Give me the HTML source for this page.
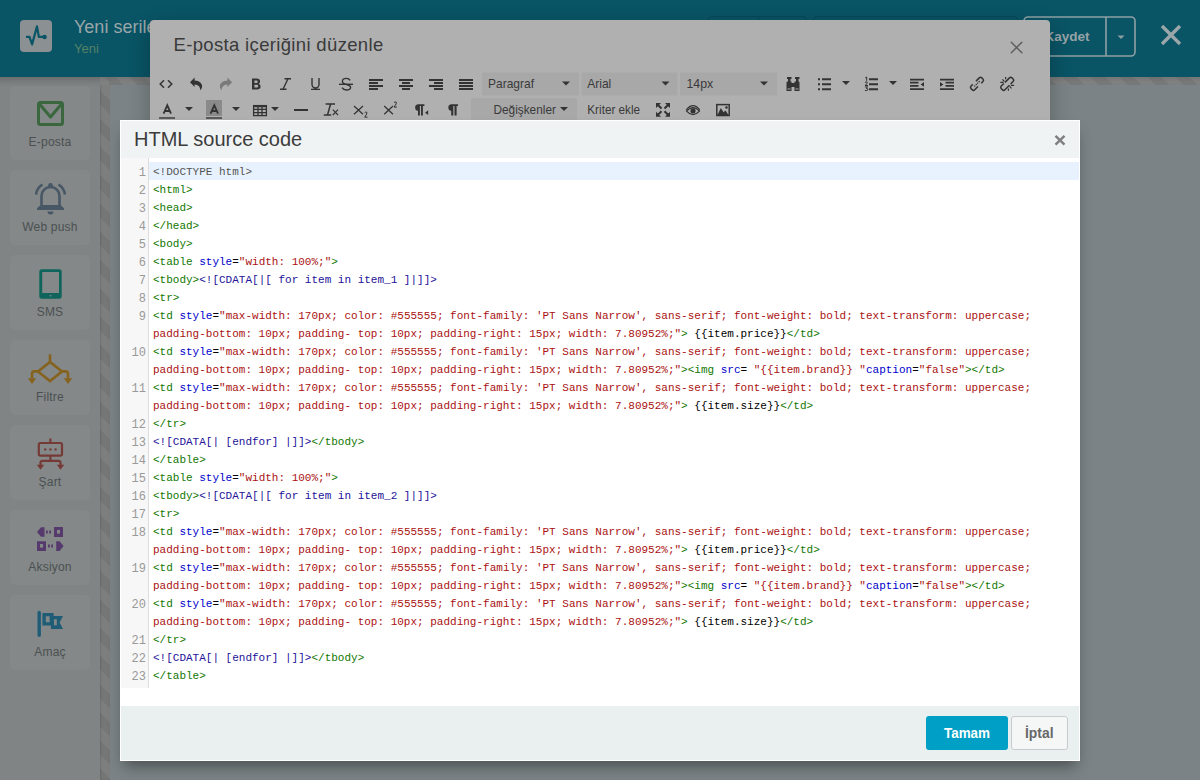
<!DOCTYPE html>
<html><head><meta charset="utf-8">
<style>
*{margin:0;padding:0;box-sizing:border-box}
html,body{width:1200px;height:780px;overflow:hidden;background:#7b8386;font-family:"Liberation Sans",sans-serif;position:relative}
.abs{position:absolute}
#hdr{left:0;top:0;width:1200px;height:77px;background:#095465}
#logo{left:20px;top:20px;width:32px;height:32px;border-radius:4px;background:#8b9192}
#ttl{left:74px;top:17px;font-size:18px;color:#9aa6a9;white-space:nowrap}
#sub{left:74px;top:41px;font-size:13px;color:#558266}
#side{left:0;top:77px;width:100px;height:703px;background:#808484}
.card{position:absolute;left:10px;width:80px;height:75px;border-radius:5px;background:#848888}
.card span{position:absolute;left:0;width:80px;text-align:center;top:50px;font-size:12px;letter-spacing:.2px;color:#4b5052}
.card svg{position:absolute;left:0;top:0}
#vstripe{left:100px;top:77px;width:10px;height:703px;background:repeating-linear-gradient(45deg,#757777 0 10px,#7d7f7f 10px 20px);background-position:0 3px;box-shadow:inset 1px 0 2px rgba(0,0,0,.12)}
#hstripe{left:100px;top:77px;width:1100px;height:8px;background:repeating-linear-gradient(45deg,#777979 0 10px,#7f8080 10px 20px);background-position:9px 0}
#m1{left:150px;top:20px;width:900px;height:300px;background:#b0b0b0;border-radius:4px 4px 0 0;box-shadow:0 8px 22px rgba(0,0,0,.26)}
#m1 .t{position:absolute;left:23.5px;top:13.5px;font-size:18.5px;letter-spacing:.34px;color:#3a3a3a;white-space:nowrap}
#m2{left:120px;top:120px;width:960px;height:641px;background:#fff;box-shadow:0 9px 14px -4px rgba(0,0,0,.4)}
#m2h{left:1px;top:1px;width:958px;height:37px;background:#f0f3f4}
#m2h .t{position:absolute;left:13px;top:7px;font-size:20px;color:#3c3c3c;white-space:nowrap}
#code{left:0;top:42px;width:960px;font-family:"Liberation Mono",monospace;font-size:11px;line-height:18px}
#gut{left:1px;top:38px;width:28px;height:530px;background:#f7f7f7;border-right:1px solid #ddd}
.ln{position:absolute;margin-top:2.5px;left:0;width:26px;text-align:right;color:#999;font-family:"Liberation Mono",monospace;font-size:12px;line-height:17px}
.row{position:absolute;margin-top:1px;left:33px;white-space:pre;color:#000;height:18px;font-family:"Liberation Mono",monospace;font-size:11px;line-height:18px}
.act{position:absolute;left:29px;top:42px;width:930px;height:18px;background:#e8f2ff}
.g{color:#170}.b{color:#00c}.r{color:#a11}.m{color:#555}.c{color:#219}
#foot{left:1px;top:586px;width:958px;height:54px;background:#eaf0f0}
.btn{position:absolute;top:10px;height:34px;border-radius:3px;font-size:14px;font-weight:bold;text-align:center;line-height:33px}
</style></head><body>
<div id="hdr" class="abs"></div>
<div id="logo" class="abs"></div>
<div id="ttl" class="abs">Yeni serileri</div>
<div id="sub" class="abs">Yeni</div>
<div id="side" class="abs"></div>
<div class="card" style="top:85px"><svg width="80" height="75"><rect x="28.5" y="17.5" width="24" height="22" rx="2" fill="none" stroke="#3a673d" stroke-width="3"/><path d="M29.5 19L40.5 32L51.5 19" fill="none" stroke="#3a673d" stroke-width="3" stroke-linejoin="round"/></svg><span>E-posta</span></div>
<div class="card" style="top:170px"><svg width="80" height="75"><path d="M31.5 36.5V26A9 9 0 0 1 49.5 26V36.5" fill="none" stroke="#475766" stroke-width="2.6"/><path d="M30.5 35L27 38.2V40H54V38.2L50.5 35Z" fill="#475766"/><circle cx="40.5" cy="15.5" r="2.4" fill="#475766"/><path d="M37.5 41.5A3 3 0 0 0 43.5 41.5Z" fill="#475766"/><path d="M26 24.5A14 14 0 0 1 32.5 14.5M55 24.5A14 14 0 0 0 48.5 14.5" fill="none" stroke="#475766" stroke-width="2.6"/></svg><span>Web push</span></div>
<div class="card" style="top:255px"><svg width="80" height="75"><path fill-rule="evenodd" fill="#0f655c" d="M31.8 14.2H49.2A2.5 2.5 0 0 1 51.7 16.7V41.3A2.5 2.5 0 0 1 49.2 43.8H31.8A2.5 2.5 0 0 1 29.3 41.3V16.7A2.5 2.5 0 0 1 31.8 14.2ZM32.2 17V38.1H49V17Z"/><path d="M39 40.2h3l-1.5 1.5z" fill="#848888"/></svg><span>SMS</span></div>
<div class="card" style="top:340px"><svg width="80" height="75"><path d="M40 14.3V22M40 22L28 31.4L40 41L52 31.4Z M28 31.4H24.5Q22 31.4 22 34V38.5 M52 31.4H55.5Q58 31.4 58 34V38.5" fill="none" stroke="#85631f" stroke-width="2.6" stroke-linejoin="miter"/><path d="M17.8 38.2H26.2L22 44Z M53.8 38.2H62.2L58 44Z" fill="#85631f"/></svg><span>Filtre</span></div>
<div class="card" style="top:425px"><svg width="80" height="75"><rect x="28.8" y="18" width="23.2" height="12.6" rx="1.6" fill="none" stroke="#753a36" stroke-width="2.2"/><path d="M40.4 13.5V18M40.4 30.6V35.8M30.5 40V37.8Q30.5 35.8 32.5 35.8H48.5Q50.5 35.8 50.5 37.8V40" fill="none" stroke="#753a36" stroke-width="2.2"/><circle cx="35.2" cy="24.4" r="1.2" fill="#753a36"/><circle cx="40.4" cy="24.4" r="1.2" fill="#753a36"/><circle cx="45.6" cy="24.4" r="1.2" fill="#753a36"/><path d="M26.8 39.8H34.2L30.5 44.8Z M46.8 39.8H54.2L50.5 44.8Z" fill="#753a36"/></svg><span>Şart</span></div>
<div class="card" style="top:510px"><svg width="80" height="75"><path d="M27 22L31 17.2H34.5V26.8H31Z M44 17H53V27H44Z M27 31.2H36V41H27Z M46.2 31.2H49.6L53.6 36.1L49.6 41H46.2Z" fill="#573a6d"/><path d="M36 20.5h1.8v3h-1.8z M39.2 20.5h1.8v3h-1.8z M38 34.5h1.8v3h-1.8z M41.2 34.5h1.8v3h-1.8z" fill="#573a6d"/><rect x="47" y="20" width="3" height="3.6" fill="#848888"/><rect x="30" y="34" width="3" height="3.6" fill="#848888"/></svg><span>Aksiyon</span></div>
<div class="card" style="top:595px"><svg width="80" height="75"><path d="M29.2 17.5V40.3" stroke="#1f5d76" stroke-width="3.4" stroke-linecap="round"/><path fill-rule="evenodd" fill="#1f5d76" d="M32.4 18H43.6V21H53L49.6 27.5L53 34H40.9V30.5H32.4Z M35.8 21.2V27.3H39.6V21.2Z M44 24.2V30.3H46.8V24.2Z"/></svg><span>Amaç</span></div>
<div id="vstripe" class="abs"></div>
<div id="hstripe" class="abs"></div>
<div class="abs" style="left:0;top:77px;width:100px;height:9px;background:linear-gradient(#767878,#7a7d7d 60%,#7f8383)"></div>
<div class="abs" style="left:0;top:77px;width:1200px;height:5px;background:linear-gradient(rgba(0,0,0,.08),rgba(0,0,0,0))"></div>
<svg class="abs" style="left:0;top:0" width="1200" height="780" viewBox="0 0 1200 780">
 <path d="M26 36.8H29.5L32.1 44.4L37 26.4L38.8 36.8H44" fill="none" stroke="#0a5566" stroke-width="2.2" stroke-linejoin="round"/>
 <circle cx="44.6" cy="37" r="2.2" fill="#0a5566"/>
 <!-- header right buttons (behind modal) -->
 <rect x="708.5" y="16.5" width="98" height="39" rx="4" fill="none" stroke="#07485a" stroke-width="1.2"/><path d="M758.5 16.5V56" stroke="#07485a" stroke-width="1.2"/>
 <rect x="813.5" y="16.5" width="204" height="39" rx="4" fill="none" stroke="#07485a" stroke-width="1.2"/>
 <rect x="1024" y="17" width="111" height="39" rx="4" fill="none" stroke="#8fa0a4" stroke-width="1.6"/>
 <line x1="1106" y1="17" x2="1106" y2="56" stroke="#8fa0a4" stroke-width="1.6"/>
 <path d="M1117.5 35.5h7l-3.5 3.5z" fill="#8fa0a4"/>
 <text x="1044.5" y="40.5" font-family="Liberation Sans" font-weight="bold" font-size="13.5" fill="#97a3a6">Kaydet</text>
 <path d="M1162 26L1180 44M1180 26L1162 44" stroke="#9aa7aa" stroke-width="3.4"/>
</svg>
<div id="m1" class="abs"><div class="t">E-posta içeriğini düzenle</div></div>
<svg class="abs" style="left:0;top:0" width="1200" height="130" viewBox="0 0 1200 130">
 <g fill="none" stroke="#5c5c5c" stroke-width="1.4" stroke-linecap="round"><path d="M1011.3 42.2L1021.9 52.8M1021.9 42.2L1011.3 52.8"/></g>
 <!-- select boxes -->
 <rect x="482" y="72.5" width="97" height="23" fill="#a8a8a8"/>
 <rect x="581.5" y="72.5" width="96" height="23" fill="#a8a8a8"/>
 <rect x="680" y="72.5" width="97" height="23" fill="#a8a8a8"/>
 <rect x="471" y="98" width="106" height="22" fill="#a8a8a8"/>
 <rect x="206" y="100" width="16" height="16" fill="#8a8a8a"/>
 <g font-family="Liberation Sans" font-size="13" fill="#3a3a3a">
  <text x="488" y="88" textLength="46" lengthAdjust="spacingAndGlyphs">Paragraf</text>
  <text x="587.3" y="88" textLength="24" lengthAdjust="spacingAndGlyphs">Arial</text>
  <text x="686.5" y="88" textLength="26.7" lengthAdjust="spacingAndGlyphs">14px</text>
  <text x="493.5" y="114" textLength="62.4" lengthAdjust="spacingAndGlyphs">Değişkenler</text>
  <text x="587.3" y="114" textLength="52.8" lengthAdjust="spacingAndGlyphs">Kriter ekle</text>
 </g>
 <g fill="#333">
  <path d="M562 81.5h8l-4 4z M661.5 81.5h8l-4 4z M760 81.5h8l-4 4z M560 107h8l-4 4z"/>
  <path d="M842 81h8l-4 4z M889 81h8l-4 4z M185 107h8l-4 4z M232 107h8l-4 4z M271 107h8l-4 4z"/>
 </g>
 <g fill="none" stroke="#333" stroke-width="1.5">
  <path d="M164 80.2L160.2 84L164 87.8M168 80.2L171.8 84L168 87.8"/>
 </g>
 <path fill="#333" d="M190 82.3L194.6 77.6V80.5C199.5 80.6 202.5 83.6 202.1 86.7C201.9 88.2 201.2 89.4 200 90.2C200.6 87.2 198.6 84.6 194.6 84.4V87Z"/>
 <path fill="#7a7a7a" d="M232 82.3L227.4 77.6V80.5C222.5 80.6 219.5 83.6 219.9 86.7C220.1 88.2 220.8 89.4 222 90.2C221.4 87.2 223.4 84.6 227.4 84.4V87Z"/>
 <path fill="#333" fill-rule="evenodd" d="M252 78.5H256.6C259 78.5 260.1 79.8 260.1 81.4C260.1 82.6 259.4 83.4 258.5 83.8C259.7 84.2 260.6 85.2 260.6 86.7C260.6 88.5 259.2 89.5 256.9 89.5H252Z M254.4 80.4V83H256.2C257.2 83 257.7 82.5 257.7 81.7C257.7 80.9 257.2 80.4 256.2 80.4Z M254.4 84.8V87.6H256.5C257.6 87.6 258.2 87.1 258.2 86.2C258.2 85.3 257.6 84.8 256.5 84.8Z"/>
 <g fill="none" stroke="#333" stroke-width="1.4">
  <path d="M284.5 78.7H291M280 89.3H286.5M288 78.7L283 89.3"/>
  <path d="M312 78V84.5A3.5 3.5 0 0 0 319 84.5V78M311 89.4H320"/>
  <path d="M339 84.3H353"/>
  <path d="M350.2 80.3C349.3 78.9 348 78.4 346.3 78.4C344 78.4 342.4 79.6 342.4 81.4C342.4 85.3 350.6 83.7 350.6 87.3C350.6 89.1 348.9 90 346.6 90C344.6 90 343 89.2 342 87.6"/>
 </g>
 <g fill="#333">
  <path d="M369 79h14v2h-14z M369 82h9v2h-9z M369 85h14v2h-14z M369 88h9v2h-9z"/>
  <path d="M399 79h14v2h-14z M402 82h8v2h-8z M399 85h14v2h-14z M402 88h8v2h-8z"/>
  <path d="M429 79h14v2h-14z M434 82h9v2h-9z M429 85h14v2h-14z M434 88h9v2h-9z"/>
  <path d="M459 79h14v2h-14z M459 82h14v2h-14z M459 85h14v2h-14z M459 88h14v2h-14z"/>
 </g>
 <!-- binoculars -->
 <g fill="#333">
  <path d="M787 77h4.5v2h-4.5z M795 77h4.5v2h-4.5z M788 79h2.5v3h-2.5z M796 79h2.5v3h-2.5z"/>
  <path d="M786.5 82.5Q786.5 81.5 787.5 81.5H791.5V91H786.5Z M794.5 81.5H798.5Q799.5 81.5 799.5 82.5V91H794.5Z M791.5 83h3v4h-3z"/>
 </g>
 <path fill="#aaa" d="M787.5 88.5h3v1h-3z M795.5 88.5h3v1h-3z"/>
 <!-- bullist -->
 <g fill="#333">
  <path d="M818 78.2h2v2h-2z M818 83.2h2v2h-2z M818 88.2h2v2h-2z M822 78.2h9v2h-9z M822 83.2h9v2h-9z M822 88.2h9v2h-9z"/>
  <path d="M869 78.2h9v2h-9z M869 83.2h9v2h-9z M869 88.2h9v2h-9z"/>
 </g>
 <path fill="none" stroke="#333" stroke-width="1" d="M865.2 77.9L866.7 77V80.9M864.9 82.4Q866 81.5 867.3 82.2Q868 83.2 865 85.5H868M864.9 86.9H867.7L866.1 88.3Q868.2 88.3 868 89.7Q867.2 91 864.9 90.4"/>
 <!-- outdent/indent -->
 <g fill="#333">
  <path d="M910 78.8h14v1.8h-14z M910 81.8h8.5v1.8h-8.5z M910 85h8.5v1.8h-8.5z M910 88.2h14v1.8h-14z M924 82L920.6 84.4L924 86.8Z"/>
  <path d="M940 78.8h14v1.8h-14z M945.5 81.8h8.5v1.8h-8.5z M945.5 85h8.5v1.8h-8.5z M940 88.2h14v1.8h-14z M940 82L943.4 84.4L940 86.8Z"/>
 </g>
 <!-- link / unlink -->
 <g fill="none" stroke="#333" stroke-width="1.5">
  <g transform="translate(977 83.8) rotate(-45)"><path d="M1.2 -2.6H5.8A1.8 1.8 0 0 1 7.6 -0.8V0.8A1.8 1.8 0 0 1 5.8 2.6H3.4M-1.2 2.6H-5.8A1.8 1.8 0 0 1 -7.6 0.8V-0.8A1.8 1.8 0 0 1 -5.8 -2.6H-3.4"/><path d="M-3.8 0H3.8" stroke-width="1.2" stroke-dasharray="1.3 .8"/></g>
  <g transform="translate(1007.2 83.8) rotate(-45)"><path d="M-0.6 -2.6H5.8A1.8 1.8 0 0 1 7.6 -0.8V0.8A1.8 1.8 0 0 1 5.8 2.6H2.2M0.6 2.6H-5.8A1.8 1.8 0 0 1 -7.6 0.8V-0.8A1.8 1.8 0 0 1 -5.8 -2.6H-2.2"/></g>
  <path d="M1000.3 82.3H1003.6M1002.4 79.4L1004.3 81.3M1005.6 77V79.2M1010.8 85.4H1014.1M1009.6 86.4L1011.5 88.3M1008.4 88.6V90.8" stroke-width="1.2"/>
 </g>
 <!-- row 2 -->
 <g fill="none" stroke="#333" stroke-width="1.4">
  <path d="M163.6 113.6L167.3 105.3L171 113.6M165 111H169.6" stroke-width="1.8"/>
  <path d="M210.6 113.6L214.3 105.3L218 113.6M212 111H216.6" stroke-width="1.8"/>
 </g>
 <rect x="159" y="117" width="16" height="2" fill="#5a5a5a"/>
 <rect x="206" y="117" width="16" height="2" fill="#5a5a5a"/>
 <g fill="none" stroke="#333" stroke-width="1.3">
  <rect x="253.6" y="105.6" width="12.8" height="10"/>
  <path d="M253.6 109.3H266.4M253.6 112.6H266.4M258 107V115.6M262 107V115.6"/>
 </g>
 <rect x="253" y="105" width="14" height="2.2" fill="#333"/>
 <rect x="294" y="109" width="14" height="2" fill="#333"/>
 <g fill="none" stroke="#333" stroke-width="1.5">
  <path d="M325.6 104H335M330.6 104L327.6 114.6M323.8 115H331.2"/>
  <path d="M332.8 109.6L338 115M338 109.6L332.8 115" stroke-width="1.1"/>
  <path d="M354 106L363 114.3M363 106L354 114.3" stroke-width="1.2"/>
  <path d="M384.2 106L393 114.3M393 106L384.2 114.3" stroke-width="1.2"/>
 </g>
 <path fill="none" stroke="#333" stroke-width="1" d="M364.6 112.6Q365.7 111.7 366.9 112.3Q367.6 113.3 364.7 117.2H367.5M394 102.5Q395.1 101.6 396.3 102.2Q397 103.2 394.1 107.1H396.9"/>
 <!-- pilcrows -->
 <g fill="#333">
  <path d="M417.8 104.3H424.4V106H422.9V115.6H421V106H419.9V115.6H418V110.8A3.3 3.3 0 0 1 417.8 104.3Z"/>
  <path d="M428.2 110.3V115.1L425 112.7Z"/>
  <path d="M451 104.3H458V106H456.6V115.6H454.5V106H453.3V115.6H451.2V110.8A3.3 3.3 0 0 1 451 104.3Z"/>
 </g>
 <!-- fullscreen -->
 <g fill="#333">
  <path d="M656 103H661L656 108Z M670 103H665L670 108Z M656 116.8H661L656 111.8Z M670 116.8H665L670 111.8Z"/>
 </g>
 <g stroke="#333" stroke-width="2"><path d="M657.5 104.5L661.5 108.5M668.5 104.5L664.5 108.5M657.5 115.3L661.5 111.3M668.5 115.3L664.5 111.3"/></g>
 <!-- eye -->
 <g fill="none" stroke="#333" stroke-width="1.2">
  <path d="M686.3 109.8Q693 101.5 699.7 109.8"/>
  <path d="M686.5 111.2Q693 104 699.5 111.2Q693 118 686.5 111.2Z"/>
 </g>
 <circle cx="693" cy="110.8" r="2.6" fill="#333"/>
 <!-- image -->
 <rect x="716.8" y="104.6" width="12.4" height="10.9" fill="none" stroke="#333" stroke-width="1.5"/>
 <path d="M717.5 115L720.8 108L723.6 112.3L725.5 110.5L728.5 115Z" fill="#333"/>
 <circle cx="726.5" cy="107.5" r="1.3" fill="#333"/>
</svg>

<div id="m2" class="abs">
  <div id="m2h" class="abs"><div class="t">HTML source code</div></div>
  <div id="gut" class="abs"></div>
  <div class="act"></div>
<div class="ln" style="top:42px">1</div>
<div class="row" style="top:42px"><span class="m">&lt;!DOCTYPE html&gt;</span></div>
<div class="ln" style="top:60px">2</div>
<div class="row" style="top:60px"><span class="g">&lt;html&gt;</span></div>
<div class="ln" style="top:78px">3</div>
<div class="row" style="top:78px"><span class="g">&lt;head&gt;</span></div>
<div class="ln" style="top:96px">4</div>
<div class="row" style="top:96px"><span class="g">&lt;/head&gt;</span></div>
<div class="ln" style="top:114px">5</div>
<div class="row" style="top:114px"><span class="g">&lt;body&gt;</span></div>
<div class="ln" style="top:132px">6</div>
<div class="row" style="top:132px"><span class="g">&lt;table</span> <span class="b">style</span>=<span class="r">"width: 100%;"</span><span class="g">&gt;</span></div>
<div class="ln" style="top:150px">7</div>
<div class="row" style="top:150px"><span class="g">&lt;tbody&gt;</span><span class="c">&lt;![CDATA[|[ for item in item_1 ]|]]&gt;</span></div>
<div class="ln" style="top:168px">8</div>
<div class="row" style="top:168px"><span class="g">&lt;tr&gt;</span></div>
<div class="ln" style="top:186px">9</div>
<div class="row" style="top:186px"><span class="g">&lt;td</span> <span class="b">style</span>=<span class="r">"max-width: 170px; color: #555555; font-family: 'PT Sans Narrow', sans-serif; font-weight: bold; text-transform: uppercase;</span></div>
<div class="row" style="top:204px"><span class="r">padding-bottom: 10px; padding- top: 10px; padding-right: 15px; width: 7.80952%;"</span><span class="g">&gt;</span> {{item.price}}<span class="g">&lt;/td&gt;</span></div>
<div class="ln" style="top:222px">10</div>
<div class="row" style="top:222px"><span class="g">&lt;td</span> <span class="b">style</span>=<span class="r">"max-width: 170px; color: #555555; font-family: 'PT Sans Narrow', sans-serif; font-weight: bold; text-transform: uppercase;</span></div>
<div class="row" style="top:240px"><span class="r">padding-bottom: 10px; padding- top: 10px; padding-right: 15px; width: 7.80952%;"</span><span class="g">&gt;&lt;img</span> <span class="b">src</span>= <span class="r">"{{item.brand}} "</span><span class="b">caption</span>=<span class="r">"false"</span><span class="g">&gt;&lt;/td&gt;</span></div>
<div class="ln" style="top:258px">11</div>
<div class="row" style="top:258px"><span class="g">&lt;td</span> <span class="b">style</span>=<span class="r">"max-width: 170px; color: #555555; font-family: 'PT Sans Narrow', sans-serif; font-weight: bold; text-transform: uppercase;</span></div>
<div class="row" style="top:276px"><span class="r">padding-bottom: 10px; padding- top: 10px; padding-right: 15px; width: 7.80952%;"</span><span class="g">&gt;</span> {{item.size}}<span class="g">&lt;/td&gt;</span></div>
<div class="ln" style="top:294px">12</div>
<div class="row" style="top:294px"><span class="g">&lt;/tr&gt;</span></div>
<div class="ln" style="top:312px">13</div>
<div class="row" style="top:312px"><span class="c">&lt;![CDATA[| [endfor] |]]&gt;</span><span class="g">&lt;/tbody&gt;</span></div>
<div class="ln" style="top:330px">14</div>
<div class="row" style="top:330px"><span class="g">&lt;/table&gt;</span></div>
<div class="ln" style="top:348px">15</div>
<div class="row" style="top:348px"><span class="g">&lt;table</span> <span class="b">style</span>=<span class="r">"width: 100%;"</span><span class="g">&gt;</span></div>
<div class="ln" style="top:366px">16</div>
<div class="row" style="top:366px"><span class="g">&lt;tbody&gt;</span><span class="c">&lt;![CDATA[|[ for item in item_2 ]|]]&gt;</span></div>
<div class="ln" style="top:384px">17</div>
<div class="row" style="top:384px"><span class="g">&lt;tr&gt;</span></div>
<div class="ln" style="top:402px">18</div>
<div class="row" style="top:402px"><span class="g">&lt;td</span> <span class="b">style</span>=<span class="r">"max-width: 170px; color: #555555; font-family: 'PT Sans Narrow', sans-serif; font-weight: bold; text-transform: uppercase;</span></div>
<div class="row" style="top:420px"><span class="r">padding-bottom: 10px; padding- top: 10px; padding-right: 15px; width: 7.80952%;"</span><span class="g">&gt;</span> {{item.price}}<span class="g">&lt;/td&gt;</span></div>
<div class="ln" style="top:438px">19</div>
<div class="row" style="top:438px"><span class="g">&lt;td</span> <span class="b">style</span>=<span class="r">"max-width: 170px; color: #555555; font-family: 'PT Sans Narrow', sans-serif; font-weight: bold; text-transform: uppercase;</span></div>
<div class="row" style="top:456px"><span class="r">padding-bottom: 10px; padding- top: 10px; padding-right: 15px; width: 7.80952%;"</span><span class="g">&gt;&lt;img</span> <span class="b">src</span>= <span class="r">"{{item.brand}} "</span><span class="b">caption</span>=<span class="r">"false"</span><span class="g">&gt;&lt;/td&gt;</span></div>
<div class="ln" style="top:474px">20</div>
<div class="row" style="top:474px"><span class="g">&lt;td</span> <span class="b">style</span>=<span class="r">"max-width: 170px; color: #555555; font-family: 'PT Sans Narrow', sans-serif; font-weight: bold; text-transform: uppercase;</span></div>
<div class="row" style="top:492px"><span class="r">padding-bottom: 10px; padding- top: 10px; padding-right: 15px; width: 7.80952%;"</span><span class="g">&gt;</span> {{item.size}}<span class="g">&lt;/td&gt;</span></div>
<div class="ln" style="top:510px">21</div>
<div class="row" style="top:510px"><span class="g">&lt;/tr&gt;</span></div>
<div class="ln" style="top:528px">22</div>
<div class="row" style="top:528px"><span class="c">&lt;![CDATA[| [endfor] |]]&gt;</span><span class="g">&lt;/tbody&gt;</span></div>
<div class="ln" style="top:546px">23</div>
<div class="row" style="top:546px"><span class="g">&lt;/table&gt;</span></div>
  <div id="foot" class="abs">
   <div class="btn" style="left:805px;width:82px;background:#00a0c6;color:#fff"></div>
   <div class="btn" style="left:890px;width:57px;background:#f5f7f7;border:1px solid #c9cccc;color:#555"></div>
   <svg class="abs" style="left:0;top:0" width="960" height="55"><g font-family="Liberation Sans" font-weight="bold" font-size="14"><text x="823" y="31.5" fill="#fff" textLength="46" lengthAdjust="spacingAndGlyphs">Tamam</text><text x="904" y="31.5" fill="#686868" textLength="28.5" lengthAdjust="spacingAndGlyphs">İptal</text></g></svg>
  </div>
  <svg class="abs" style="left:930px;top:10px" width="30" height="30"><path d="M5.5 5.8L14.5 14.6M14.5 5.8L5.5 14.6" stroke="#7f8080" stroke-width="2.5"/></svg>
</div>
</body></html>
